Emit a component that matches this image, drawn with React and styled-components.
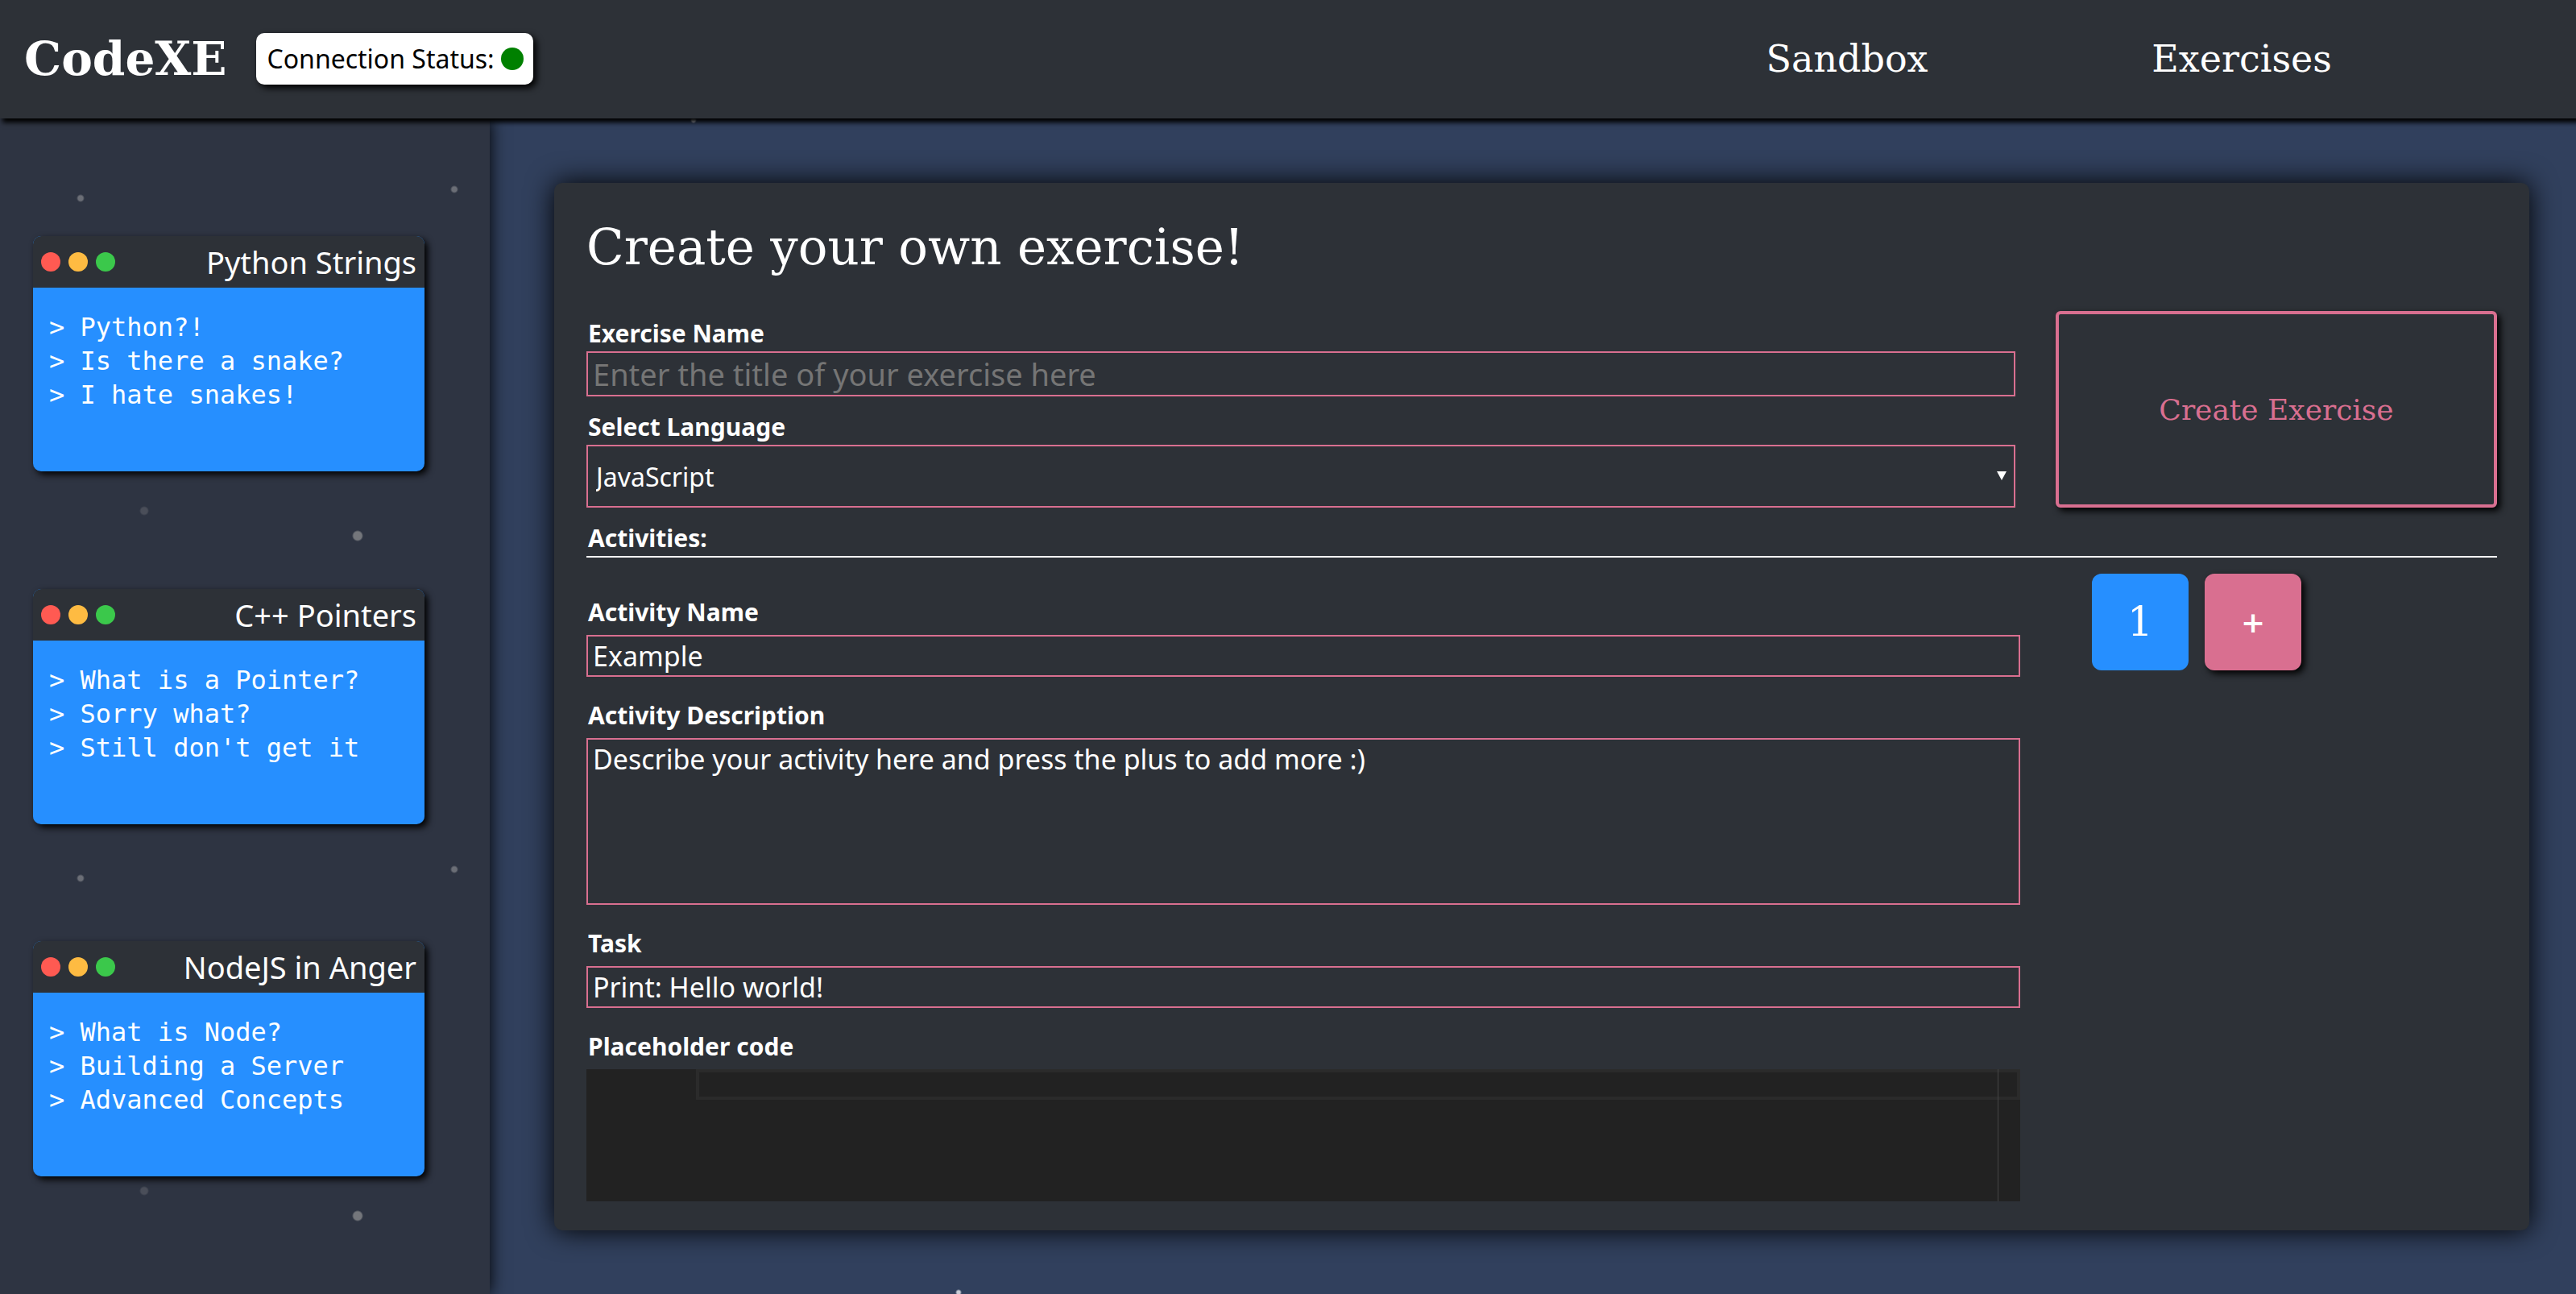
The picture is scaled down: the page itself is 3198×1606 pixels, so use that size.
import React, { useState } from "react";
import styled, { createGlobalStyle, css } from "styled-components";

const SANS = `"Noto Sans", "Open Sans", sans-serif`;
const SLAB = `"DejaVu Serif", serif`;
const MONO = `"DejaVu Sans Mono", monospace`;
const DARK = "#2d3137";
const PINK = "#d96f90";
const BLUE = "#268fff";
const SHADOW = "4px 4px 8px #000";

const GlobalStyle = createGlobalStyle`
  *, *::before, *::after { box-sizing: border-box; }
  body {
    margin: 0;
    background: #31405d;
    color: #fff;
    font-family: ${SANS};
  }
`;

const Page = styled.div`
  min-height: 100vh;
  display: flex;
  flex-direction: column;
`;

const Header = styled.header`
  display: flex;
  align-items: center;
  height: 147px;
  padding: 0 0 2px 30px;
  background: ${DARK};
  box-shadow: 4px 4px 6px 1px #000;
  z-index: 2;
`;

const Logo = styled.h1`
  margin: 0 36px 0 0;
  font: bold 58px/64px ${SLAB};
`;

const Status = styled.div`
  display: flex;
  align-items: center;
  gap: 8px;
  height: 64px;
  padding: 0 12px 0 14px;
  border-radius: 10px;
  background: #fff;
  color: #000;
  font-size: 32px;
  box-shadow: ${SHADOW};
`;

const StatusDot = styled.span`
  width: 28px;
  height: 28px;
  border-radius: 50%;
  background: #008000;
`;

const Nav = styled.nav`
  display: grid;
  grid-template-columns: repeat(2, 490px);
  justify-items: center;
  margin: 0 170px 0 auto;
`;

const NavLink = styled.a`
  color: #fff;
  font: 46px/60px ${SLAB};
  text-decoration: none;
`;

const Body = styled.div`
  flex: 1;
  display: flex;
`;

const star = (x, y, r, color) =>
  `radial-gradient(circle at ${x}px ${y}px, ${color} ${r - 1}px, transparent ${r + 1}px)`;

const Sidebar = styled.aside`
  flex: 0 0 608px;
  display: flex;
  flex-direction: column;
  justify-content: space-evenly;
  padding-left: 41px;
  background:
    ${star(100, 99, 4, "#6b6e76")},
    ${star(564, 88, 4, "#6b6e76")},
    ${star(179, 487, 5, "#4a4e59")},
    ${star(444, 518, 6, "#74767b")},
    #2e3442;
  background-size: 608px 844px, 608px 844px, 608px 844px, 608px 844px, auto;
  box-shadow: 0 0 20px #000;
  z-index: 1;
`;

const Card = styled.article`
  width: 486px;
  border-radius: 10px;
  overflow: hidden;
  background: ${BLUE};
  box-shadow: ${SHADOW};
`;

const CardHeader = styled.header`
  display: flex;
  align-items: center;
  gap: 10px;
  height: 64px;
  padding: 0 10px;
  background: ${DARK};
`;

const Light = styled.span`
  width: 24px;
  height: 24px;
  border-radius: 50%;
  background: ${(p) => p.$color};
`;

const CardTitle = styled.h2`
  margin: 0 0 0 auto;
  font-size: 38px;
  font-weight: 400;
  line-height: 60px;
`;

const Lines = styled.ul`
  height: 228px;
  margin: 0;
  padding: 28px 20px;
  list-style: none;
  font: 32px/42px ${MONO};
`;

const Main = styled.main`
  flex: 1;
  min-width: 0;
  padding: 80px 58px 79px 80px;
  background:
    ${star(253, 2, 3, "#c8ccd6")},
    ${star(582, 1457, 3, "#c8ccd6")};
`;

const Panel = styled.form`
  padding: 40px 40px 36px;
  border-radius: 10px;
  background: ${DARK};
  box-shadow: 0 0 34px #000;
`;

const Title = styled.h2`
  margin: 0 0 39px;
  font: 61px/80px ${SLAB};
`;

const Setup = styled.div`
  display: grid;
  grid-template-columns: minmax(0, 1fr) 548px;
  gap: 50px;
  height: 244px;
`;

const Fields = styled.div`
  display: flex;
  flex-direction: column;
  justify-content: flex-end;
  gap: ${(p) => p.$gap};
`;

const Field = styled.div`
  display: flex;
  flex-direction: column;
  gap: ${(p) => p.$gap || "0"};
`;

const labelText = css`
  padding-left: 2px;
  font-size: 30px;
  font-weight: 700;
  line-height: 44px;
`;

const Label = styled.label`
  ${labelText}
`;

const controlBox = css`
  display: block;
  width: 100%;
  margin: 0;
  border: 2px solid ${PINK};
  border-radius: 0;
  outline: none;
  background: transparent;
  color: #fff;
  font-family: ${SANS};
`;

const TextInput = styled.input`
  ${controlBox}
  height: ${(p) => (p.$large ? "56px" : "52px")};
  padding: 0 6px;
  font-size: ${(p) => (p.$large ? "38px" : "34px")};
  &::placeholder { color: #757575; }
`;

const SelectWrap = styled.div`
  position: relative;
  &::after {
    content: "";
    position: absolute;
    right: 11px;
    top: 33px;
    border: 6px solid transparent;
    border-top: 11px solid #fff;
    border-bottom: 0;
    pointer-events: none;
  }
`;

const Select = styled.select`
  ${controlBox}
  height: 78px;
  padding: 0 10px;
  appearance: none;
  font-size: 32px;
`;

const TextArea = styled.textarea`
  ${controlBox}
  height: 207px;
  padding: 2px 6px;
  resize: none;
  font-size: 34px;
  line-height: 44px;
`;

const CreateButton = styled.button`
  border: 4px solid ${PINK};
  border-radius: 6px;
  background: transparent;
  color: ${PINK};
  font: 36px ${SLAB};
  box-shadow: ${SHADOW};
`;

const SectionTitle = styled.h3`
  ${labelText}
  margin: 16px 0 0;
  border-bottom: 2px solid #fff;
`;

const Activities = styled.div`
  display: grid;
  grid-template-columns: minmax(0, 1fr) 592px;
`;

const ActivityFields = styled(Fields)`
  padding-top: 46px;
`;

const Tiles = styled.div`
  display: flex;
  align-items: flex-start;
  gap: 20px;
  padding: 20px 0 0 89px;
`;

const Tile = styled.button`
  width: 120px;
  height: 120px;
  padding: 0;
  border: 0;
  border-radius: 12px;
  background: ${(p) => (p.$active ? BLUE : PINK)};
  box-shadow: ${(p) => (p.$active ? "none" : SHADOW)};
  color: #fff;
  font: ${(p) => (p.$active ? "50px" : "bold 36px")} ${SLAB};
`;

const Editor = styled.div`
  position: relative;
  height: 164px;
  padding-left: 136px;
  background: #222;
  &::after {
    content: "";
    position: absolute;
    top: 0;
    bottom: 0;
    right: 27px;
    width: 1px;
    background: #444;
  }
`;

const CodeLine = styled.textarea`
  display: block;
  width: 100%;
  height: 38px;
  padding: 0 8px;
  border: 4px solid #2b2b2b;
  border-radius: 0;
  outline: none;
  resize: none;
  overflow: hidden;
  background: transparent;
  color: #e6e1dc;
  font: 24px/30px ${MONO};
`;

const CARDS = [
  { title: "Python Strings", lines: ["Python?!", "Is there a snake?", "I hate snakes!"] },
  { title: "C++ Pointers", lines: ["What is a Pointer?", "Sorry what?", "Still don't get it"] },
  { title: "NodeJS in Anger", lines: ["What is Node?", "Building a Server", "Advanced Concepts"] },
];

function ExerciseCard({ title, lines }) {
  return (
    <Card>
      <CardHeader>
        <Light $color="#ff5a52" />
        <Light $color="#febb42" />
        <Light $color="#3bc84b" />
        <CardTitle>{title}</CardTitle>
      </CardHeader>
      <Lines>
        {lines.map((line) => (
          <li key={line}>&gt; {line}</li>
        ))}
      </Lines>
    </Card>
  );
}

export default function App() {
  const [name, setName] = useState("");
  return (
    <Page>
      <GlobalStyle />
      <Header>
        <Logo>CodeXE</Logo>
        <Status>
          Connection Status:
          <StatusDot />
        </Status>
        <Nav>
          <NavLink href="#sandbox">Sandbox</NavLink>
          <NavLink href="#exercises">Exercises</NavLink>
        </Nav>
      </Header>
      <Body>
        <Sidebar>
          {CARDS.map((card) => (
            <ExerciseCard key={card.title} {...card} />
          ))}
        </Sidebar>
        <Main>
          <Panel onSubmit={(e) => e.preventDefault()}>
            <Title>Create your own exercise!</Title>
            <Setup>
              <Fields $gap="16px">
                <Field>
                  <Label htmlFor="exercise-name">Exercise Name</Label>
                  <TextInput
                    id="exercise-name"
                    $large
                    placeholder="Enter the title of your exercise here"
                    value={name}
                    onChange={(e) => setName(e.target.value)}
                  />
                </Field>
                <Field>
                  <Label htmlFor="language">Select Language</Label>
                  <SelectWrap>
                    <Select id="language" defaultValue="JavaScript">
                      <option>JavaScript</option>
                    </Select>
                  </SelectWrap>
                </Field>
              </Fields>
              <CreateButton type="submit">Create Exercise</CreateButton>
            </Setup>
            <SectionTitle>Activities:</SectionTitle>
            <Activities>
              <ActivityFields $gap="26px">
                <Field $gap="6px">
                  <Label htmlFor="activity-name">Activity Name</Label>
                  <TextInput id="activity-name" defaultValue="Example" />
                </Field>
                <Field $gap="6px">
                  <Label htmlFor="description">Activity Description</Label>
                  <TextArea
                    id="description"
                    defaultValue="Describe your activity here and press the plus to add more :)"
                  />
                </Field>
                <Field $gap="6px">
                  <Label htmlFor="task">Task</Label>
                  <TextInput id="task" defaultValue="Print: Hello world!" />
                </Field>
                <Field $gap="6px">
                  <Label htmlFor="code">Placeholder code</Label>
                  <Editor>
                    <CodeLine id="code" rows={1} spellCheck={false} />
                  </Editor>
                </Field>
              </ActivityFields>
              <Tiles>
                <Tile type="button" $active>1</Tile>
                <Tile type="button">+</Tile>
              </Tiles>
            </Activities>
          </Panel>
        </Main>
      </Body>
    </Page>
  );
}
